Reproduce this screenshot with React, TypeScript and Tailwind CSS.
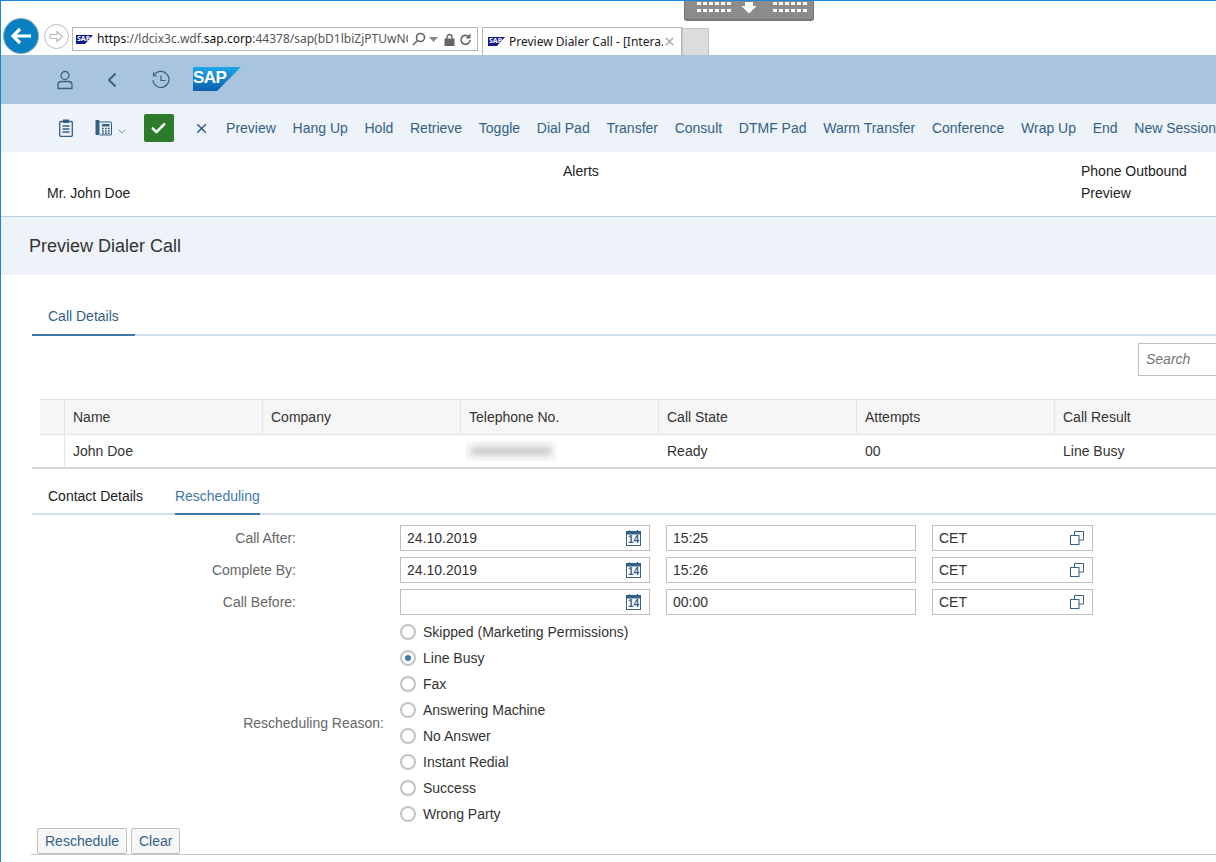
import { Check, ChevronDown, ChevronLeft, X } from 'lucide-react';

const TOOLBAR_ITEMS = [
  'Preview', 'Hang Up', 'Hold', 'Retrieve', 'Toggle', 'Dial Pad', 'Transfer',
  'Consult', 'DTMF Pad', 'Warm Transfer', 'Conference', 'Wrap Up', 'End', 'New Session',
];

const COLUMNS = ['Name', 'Company', 'Telephone No.', 'Call State', 'Attempts', 'Call Result'];

const SCHEDULE_ROWS = [
  { label: 'Call After:', date: '24.10.2019', time: '15:25' },
  { label: 'Complete By:', date: '24.10.2019', time: '15:26' },
  { label: 'Call Before:', date: '', time: '00:00' },
];

const REASONS = [
  'Skipped (Marketing Permissions)', 'Line Busy', 'Fax', 'Answering Machine',
  'No Answer', 'Instant Redial', 'Success', 'Wrong Party',
];

function SapLogo({ small = false }: { small?: boolean }) {
  if (small) {
    return (
      <div className="relative w-[17px] h-[9px] shrink-0">
        <svg width="17" height="9" viewBox="0 0 17 9" className="absolute inset-0">
          <polygon points="0,0 17,0 9,9 0,9" fill="#101a8c" />
        </svg>
        <span className="absolute left-[1px] top-[-1px] text-[7px] leading-[10px] font-bold text-white">SAP</span>
      </div>
    );
  }
  return (
    <div className="relative w-[48px] h-[24px] shrink-0">
      <svg width="48" height="24" viewBox="0 0 48 24" className="absolute inset-0">
        <defs>
          <linearGradient id="sapGrad" x1="0" y1="0" x2="0" y2="1">
            <stop offset="0" stopColor="#1ea7e8" />
            <stop offset="1" stopColor="#0a5fb0" />
          </linearGradient>
        </defs>
        <polygon points="0,0 48,0 24,24 0,24" fill="url(#sapGrad)" />
      </svg>
      <span className="absolute left-[0px] top-[2px] text-[17px] leading-[18px] font-bold text-white tracking-[-0.6px]">SAP</span>
    </div>
  );
}

function UserIcon() {
  return (
    <svg width="16" height="20" viewBox="0 0 16 20" fill="none" stroke="#346187" strokeWidth="1.3">
      <circle cx="8" cy="5.5" r="4" />
      <path d="M1 18.5v-3.5c0-2 1.5-3.5 3.5-3.5h7c2 0 3.5 1.500 3.500 3.500v3.500z" />
    </svg>
  );
}

function HistoryIcon() {
  return (
    <svg width="20" height="20" viewBox="0 0 20 20" fill="none" stroke="#346187" strokeWidth="1.2">
      <path d="M3.200 5.200A8 8 0 1 1 2 10" />
      <path d="M2.500 2.500v3.500h3.500" />
      <path d="M10 5.500v5h4.500" />
    </svg>
  );
}

function ClipboardIcon() {
  return (
    <svg width="14" height="18" viewBox="0 0 14 18" fill="none" stroke="#346187">
      <path d="M4 2.500H1.500a.8.8 0 0 0-.8.800v13.200a.8.8 0 0 0 .8.800h11a.8.8 0 0 0 .8-.800V3.300a.8.8 0 0 0-.8-.800H10" strokeWidth="1.300" />
      <rect x="4" y="0.500" width="6" height="3.500" fill="#346187" stroke="none" />
      <path d="M3.500 7h7M3.500 10h7M3.500 13h7" strokeWidth="1.300" />
    </svg>
  );
}

function PhoneBookIcon() {
  return (
    <svg width="17" height="17" viewBox="0 0 17 17" fill="none">
      <rect x="0.500" y="1" width="4" height="15" rx="0.800" fill="#346187" />
      <path d="M4.500 3h11.500a.5.5 0 0 1 .5.500v12a.5.5 0 0 1-.5.500H4.500" stroke="#346187" strokeWidth="1" />
      <rect x="7" y="5" width="7.500" height="2.500" fill="#346187" />
      <path d="M7 9.500h1.800M9.900 9.500h1.800M12.800 9.500h1.800M7 12h1.800M9.900 12h1.800M12.800 12h1.800M7 14.300h1.800M9.900 14.300h1.800M12.800 14.300h1.800" stroke="#346187" strokeWidth="1.400" />
    </svg>
  );
}

function CalendarIcon() {
  return (
    <div className="relative w-[15px] h-[16px] shrink-0">
      <svg width="15" height="16" viewBox="0 0 15 16" fill="none" className="absolute inset-0">
        <rect x="0.500" y="1.500" width="14" height="14" stroke="#346187" />
        <rect x="0.500" y="1.500" width="14" height="3" fill="#346187" />
        <path d="M3.500 0v2M11.500 0v2" stroke="#346187" />
      </svg>
      <span className="absolute left-0 right-0 top-[5px] text-center text-[10px] leading-[10px] font-bold text-[#346187]">14</span>
    </div>
  );
}

function ValueHelpIcon() {
  return (
    <svg width="14" height="14" viewBox="0 0 14 14" fill="none" stroke="#346187">
      <rect x="0.500" y="4.500" width="8.500" height="9" />
      <path d="M4.500 4.500V0.500h9v8.500H9" />
    </svg>
  );
}

function TextField({ value, width, icon }: { value: string; width: string; icon?: React.ReactNode }) {
  return (
    <div className={`${width} h-[26px] shrink-0 flex items-center justify-between border border-[#bfbfbf] bg-white pl-[6px] pr-[8px] text-[14px] text-[#333]`}>
      <span>{value}</span>
      {icon}
    </div>
  );
}

function BrowserBar() {
  return (
    <div className="h-[54px] shrink-0 bg-white flex items-end pl-[2px]">
      <div className="flex items-center gap-[5px] mb-[1px] self-end">
        <div className="w-[36px] h-[36px] rounded-full bg-[#0a80c4] border border-[#8aa] flex items-center justify-center">
          <svg width="22" height="18" viewBox="0 0 22 18" fill="none" stroke="white" strokeWidth="3.200">
            <path d="M21 9H3M10 2 3 9l7 7" />
          </svg>
        </div>
        <div className="w-[25px] h-[25px] rounded-full bg-white border border-[#bdbdbd] flex items-center justify-center">
          <svg width="15" height="13" viewBox="0 0 15 13" fill="none" stroke="#b5b5b5" strokeWidth="1.100">
            <path d="M1 4.500h7V1.500l5.500 5-5.500 5v-3H1z" />
          </svg>
        </div>
      </div>
      <div className="ml-[3px] mb-[4px] w-[406px] h-[24px] border border-[#b5b5b5] flex items-center pl-[3px] pr-[4px] font-['Noto_Sans',sans-serif] text-[12px] text-[#555]">
        <SapLogo small />
        <div className="ml-[4px] w-[311px] overflow-hidden whitespace-nowrap">
          <span className="text-[#111]">https</span>://ldcix3c.wdf.<span className="text-[#111]">sap.corp</span>:44378/sap(bD1lbiZjPTUwNCZk
        </div>
        <svg width="14" height="14" viewBox="0 0 14 14" fill="none" stroke="#666" strokeWidth="1.600" className="ml-[4px] shrink-0">
          <circle cx="8.500" cy="5.500" r="4" />
          <path d="M5.500 8.500 1 13" />
        </svg>
        <svg width="9" height="5" viewBox="0 0 9 5" fill="#888" className="ml-[3px] shrink-0">
          <path d="M0 0h9L4.500 5z" />
        </svg>
        <svg width="11" height="13" viewBox="0 0 11 13" className="ml-[6px] shrink-0">
          <path d="M3 6V4a2.500 2.500 0 0 1 5 0v2" fill="none" stroke="#666" strokeWidth="1.400" />
          <rect x="0.500" y="5.500" width="10" height="7.500" fill="#666" />
        </svg>
        <svg width="12" height="13" viewBox="0 0 12 13" fill="none" className="ml-[4px] shrink-0">
          <path d="M10 4a4.500 4.500 0 1 0 1 3" stroke="#666" strokeWidth="1.600" />
          <path d="M11.500 0.500v5h-5z" fill="#666" />
        </svg>
      </div>
      <div className="ml-[4px] w-[200px] h-[28px] border border-b-0 border-[#b5b5b5] flex items-center pl-[5px] pr-[5px] font-['Noto_Sans',sans-serif] text-[12px] text-[#222]">
        <SapLogo small />
        <span className="ml-[4px] flex-1 whitespace-nowrap overflow-hidden">Preview Dialer Call - [Intera...</span>
        <X size={13} strokeWidth={2.500} className="text-[#aaa] shrink-0" />
      </div>
      <div className="w-[27px] h-[27px] bg-[#dcdcdc] border-x border-t border-[#c4c4c4]" />
    </div>
  );
}

function ConnectionBar() {
  return (
    <div className="absolute left-[683px] top-[-1px] w-[130px] h-[21px] bg-[#8c8c8c] border-x border-b-2 border-[#777] rounded-b-[3px] flex items-start justify-center">
      <svg width="120" height="16" viewBox="0 0 120 16" fill="white">
        <g>
          {[0, 6, 12, 18, 24, 30, 76, 82, 88, 94, 100, 106].map((x) => (
            <g key={x}>
              <rect x={x + 8} y="2" width="4" height="3" />
              <rect x={x + 8} y="9" width="4" height="3" />
            </g>
          ))}
        </g>
        <path d="M56 2h8v4h3.500L60 13.500 52.500 6H56z" />
      </svg>
    </div>
  );
}

export default function App() {
  return (
    <div className="relative w-[1216px] h-[862px] overflow-hidden bg-white border-l border-t border-[#1a86d9] font-['Liberation_Sans',Arial,sans-serif] flex flex-col">
      <BrowserBar />
      <ConnectionBar />

      {/* Shell bar */}
      <div className="h-[49px] shrink-0 bg-[#a9c4dd] flex items-center">
        <div className="ml-[56px]"><UserIcon /></div>
        <ChevronLeft size={24} strokeWidth={2} className="ml-[27px] text-[#346187]" />
        <div className="ml-[27px]"><HistoryIcon /></div>
        <div className="ml-[22px] mb-[2px]"><SapLogo /></div>
      </div>

      {/* Toolbar */}
      <div className="h-[48px] shrink-0 bg-[#edf3f8] flex items-center whitespace-nowrap text-[14px] text-[#346187]">
        <div className="ml-[58px]"><ClipboardIcon /></div>
        <div className="ml-[22px] mb-[2px]"><PhoneBookIcon /></div>
        <ChevronDown size={13} strokeWidth={1.500} className="ml-[4px] mt-[6px]" />
        <div className="ml-[16px] w-[34px] h-[28px] rounded-[2px] bg-[#2b7d2b] flex items-center justify-center">
          <Check size={17} strokeWidth={3.500} className="text-white" />
        </div>
        <X size={17} strokeWidth={2.500} className="ml-[20px]" />
        <div className="ml-[17px] flex gap-[16.700px]">
          {TOOLBAR_ITEMS.map((item) => (
            <span key={item}>{item}</span>
          ))}
        </div>
      </div>

      {/* Contact header */}
      <div className="h-[65px] shrink-0 border-b border-[#b8cfe3] pt-[9px] pl-[46px] grid grid-cols-[516px_518px_1fr] grid-rows-[22px_22px] text-[14px] text-[#222]">
        <span>&nbsp;</span>
        <span>Alerts</span>
        <span>Phone Outbound</span>
        <span>Mr. John Doe</span>
        <span />
        <span>Preview</span>
      </div>

      {/* Page title */}
      <div className="h-[58px] shrink-0 bg-[#edf3f8] flex items-center pl-[28px] text-[18px] text-[#333]">
        Preview Dialer Call
      </div>

      {/* Call details tab */}
      <div className="mt-[27px] ml-[31px] h-[34px] shrink-0 border-b-2 border-[#cfdfee] flex">
        <div className="ml-[0px] px-[16px] h-[34px] border-b-2 border-[#3f78a8] text-[14px] leading-[28px] text-[#346187]">
          Call Details
        </div>
      </div>

      {/* Search */}
      <div className="mt-[7px] h-[33px] shrink-0 flex justify-end">
        <div className="w-[100px] -mr-[22px] border border-[#bfbfbf] pl-[7px] text-[14px] leading-[30px] italic text-[#757575]">
          Search
        </div>
      </div>

      {/* Table */}
      <div className="mt-[23px] ml-[31px] shrink-0 border-b-2 border-[#d5d5d5]">
        <div className="ml-[8px] grid grid-cols-[25px_198px_198px_198px_198px_198px_1fr] h-[36px] bg-[#f6f6f6] border-y border-[#e5e5e5] text-[14px] text-[#333]">
          <div className="border-r border-[#e5e5e5]" />
          {COLUMNS.map((col) => (
            <div key={col} className="border-r last:border-r-0 border-[#e5e5e5] pl-[8px] leading-[34px] whitespace-nowrap">
              {col}
            </div>
          ))}
        </div>
        <div className="ml-[8px] grid grid-cols-[25px_198px_198px_198px_198px_198px_1fr] h-[32px] text-[14px] text-[#333] leading-[33px]">
          <div className="border-r border-[#e5e5e5]" />
          <div className="pl-[8px]">John Doe</div>
          <div />
          <div className="pl-[5px] pt-[6px]">
            <div className="w-[90px] h-[20px] bg-[#f8f8f8] flex items-center justify-center">
              <div className="w-[80px] h-[8px] bg-[#c9c9c9] blur-[3px]" />
            </div>
          </div>
          <div className="pl-[8px]">Ready</div>
          <div className="pl-[8px]">00</div>
          <div className="pl-[8px]">Line Busy</div>
        </div>
      </div>

      {/* Sub tabs */}
      <div className="ml-[31px] h-[46px] shrink-0 border-b-2 border-[#cfdfee] flex text-[14px]">
        <div className="ml-[16px] pt-[17px] text-[#222]">Contact Details</div>
        <div className="ml-[32px] h-[46px] pt-[17px] border-b-2 border-[#3f78a8] text-[#3f78a8]">Rescheduling</div>
      </div>

      {/* Schedule form */}
      <div className="mt-[10px] shrink-0 flex flex-col gap-[6px]">
        {SCHEDULE_ROWS.map((row) => (
          <div key={row.label} className="flex items-center">
            <div className="w-[295px] text-right text-[14px] text-[#666]">{row.label}</div>
            <div className="ml-[104px] flex gap-[16px]">
              <TextField value={row.date} width="w-[250px]" icon={<CalendarIcon />} />
              <TextField value={row.time} width="w-[250px]" />
              <TextField value="CET" width="w-[161px]" icon={<ValueHelpIcon />} />
            </div>
          </div>
        ))}
      </div>

      {/* Reason radios */}
      <div className="mt-[4px] shrink-0 flex items-center">
        <div className="w-[383px] text-right text-[14px] text-[#666]">Rescheduling Reason:</div>
        <div className="ml-[16px] flex flex-col">
          {REASONS.map((reason) => (
            <div key={reason} className="h-[26px] flex items-center text-[14px] text-[#333]">
              <div className="w-[16px] h-[16px] rounded-full border-2 border-[#c4c4c4] flex items-center justify-center">
                {reason === 'Line Busy' && <div className="w-[6px] h-[6px] rounded-full bg-[#3f78a8]" />}
              </div>
              <span className="ml-[7px]">{reason}</span>
            </div>
          ))}
        </div>
      </div>

      {/* Actions */}
      <div className="ml-[30px] mt-[1px] h-[27px] shrink-0 border-b border-[#c8c8c8] flex gap-[4px] pl-[6px] text-[14px] text-[#346187]">
        <div className="h-[26px] px-[7px] bg-[#f7f7f7] border border-[#bfbfbf] rounded-[2px] leading-[24px]">Reschedule</div>
        <div className="h-[26px] px-[7px] bg-[#f7f7f7] border border-[#bfbfbf] rounded-[2px] leading-[24px]">Clear</div>
      </div>
    </div>
  );
}
